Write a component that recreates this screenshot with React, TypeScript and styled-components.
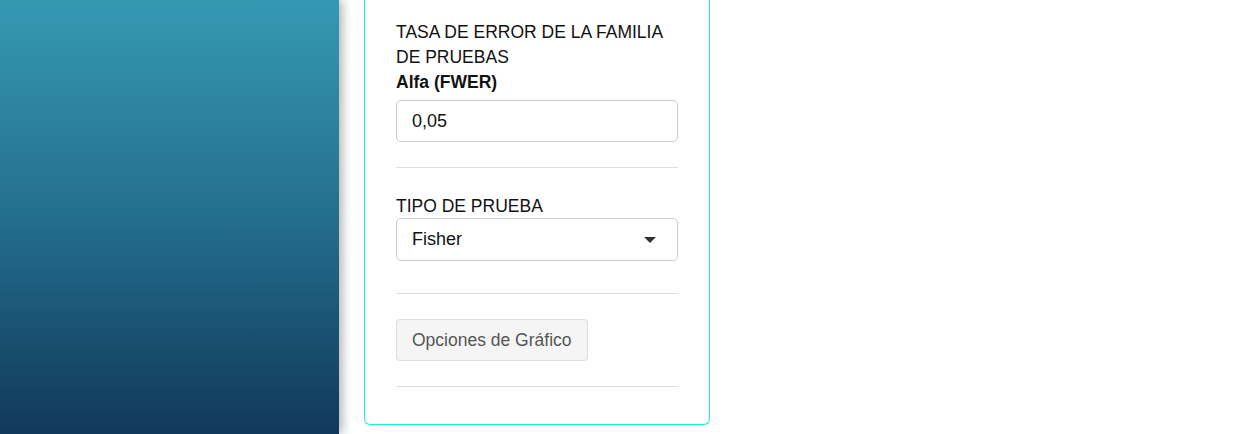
import React from "react";
import styled, { createGlobalStyle } from "styled-components";

const Global = createGlobalStyle`
  html, body { margin: 0; padding: 0; background: #ffffff; }
  body { font-family: "Liberation Sans", Arial, sans-serif; color: #111; overflow: hidden; }
  * { box-sizing: border-box; }
`;

const Page = styled.div`
  display: flex;
  align-items: flex-start;
  height: 434px;
  overflow: hidden;
`;

const Sidebar = styled.aside`
  flex: 0 0 339px;
  height: 434px;
  background: linear-gradient(to bottom, #3599b4 0%, #246e8d 50%, #11385a 100%);
  box-shadow: 3px 0 10px rgba(0, 0, 0, 0.32);
  position: relative;
  z-index: 1;
`;

const Main = styled.main`
  padding-left: 25px;
`;

const Card = styled.section`
  width: 346px;
  border: 1px solid #0ff5d0;
  border-top: none;
  border-radius: 0 0 6px 6px;
  padding: 20px 31px 37px;
  background: #fff;
  display: flex;
  flex-direction: column;
`;

const Label = styled.label<{ $gap?: number }>`
  display: block;
  font-size: 17.5px;
  line-height: 25px;
  color: #111;
  margin-top: ${(p) => p.$gap ?? 0}px;
  text-transform: uppercase;
`;

const Strong = styled.span`
  display: block;
  font-weight: 700;
  text-transform: none;
`;

const TextInput = styled.input`
  display: block;
  width: 100%;
  height: 42px;
  margin-top: 5px;
  padding: 0 15px;
  border: 1px solid #ccc;
  border-radius: 5px;
  font-family: inherit;
  font-size: 18px;
  color: #111;
  background: #fff;
  outline: none;
`;

const Select = styled.div`
  display: flex;
  align-items: center;
  justify-content: space-between;
  width: 100%;
  height: 43px;
  margin-top: -1px;
  padding: 0 21px 0 15px;
  border: 1px solid #ccc;
  border-radius: 5px;
  font-size: 18px;
  color: #111;
  background: #fff;
`;

const Caret = styled.span`
  width: 0;
  height: 0;
  border-left: 6px solid transparent;
  border-right: 6px solid transparent;
  border-top: 6px solid #333;
`;

const Rule = styled.hr<{ $gap: number }>`
  width: 100%;
  margin: ${(p) => p.$gap}px 0 0;
  border: none;
  border-top: 1px solid #ddd;
  height: 0;
`;

const Button = styled.button`
  align-self: flex-start;
  margin-top: 25px;
  height: 42px;
  padding: 0 15px;
  border: 1px solid #ddd;
  border-radius: 4px;
  background: #f5f5f5;
  color: #555;
  font-family: inherit;
  font-size: 17.5px;
  cursor: pointer;
`;

export default function App() {
  return (
    <>
      <Global />
      <Page>
        <Sidebar />
        <Main>
          <Card>
            <Label>
              Tasa de error de la familia de pruebas
              <Strong>Alfa (FWER)</Strong>
            </Label>
            <TextInput defaultValue="0,05" />
            <Rule $gap={25} />
            <Label $gap={26}>Tipo de prueba</Label>
            <Select>
              <span>Fisher</span>
              <Caret />
            </Select>
            <Rule $gap={32} />
            <Button>Opciones de Gráfico</Button>
            <Rule $gap={25} />
          </Card>
        </Main>
      </Page>
    </>
  );
}
